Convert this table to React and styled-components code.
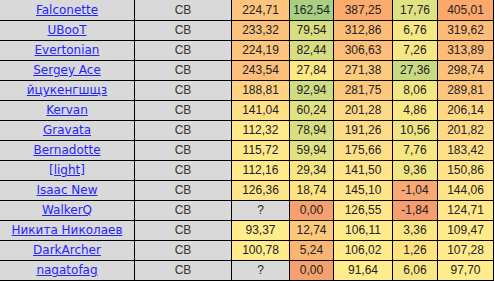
import React from 'react'
import styled, { createGlobalStyle } from 'styled-components'

const GlobalStyle = createGlobalStyle`
  html, body {
    margin: 0;
    padding: 0;
    background: #ffffff;
  }
`

const rows = [
  { name: 'Falconette', cells: [['224,71', '#fcc47c'], ['162,54', '#a9cf82'], ['387,25', '#fbab6c'], ['17,76', '#dfe283'], ['405,01', '#fba86b']] },
  { name: 'UBooT', cells: [['233,32', '#fcc17a'], ['79,54', '#d8de81'], ['312,86', '#fcbd77'], ['6,76', '#f6e884'], ['319,62', '#fcbb76']] },
  { name: 'Evertonian', cells: [['224,19', '#fcc47c'], ['82,44', '#d6de81'], ['306,63', '#fcbe78'], ['7,26', '#f5e784'], ['313,89', '#fcbc77']] },
  { name: 'Sergey Ace', cells: [['243,54', '#fcbe78'], ['27,84', '#fbe984'], ['271,38', '#fdcb7e'], ['27,36', '#c8d981'], ['298,74', '#fcc27a']] },
  { name: 'йцукенгшщз', cells: [['188,81', '#fdd383'], ['92,94', '#cfdc81'], ['281,75', '#fdc77c'], ['8,06', '#f3e684'], ['289,81', '#fdc57b']] },
  { name: 'Kervan', cells: [['141,04', '#fee187'], ['60,24', '#e1e283'], ['201,28', '#fed985'], ['4,86', '#f9e884'], ['206,14', '#fed884']] },
  { name: 'Gravata', cells: [['112,32', '#ffe98a'], ['78,94', '#d9df81'], ['191,26', '#fedb86'], ['10,56', '#ede584'], ['201,82', '#fed985']] },
  { name: 'Bernadotte', cells: [['115,72', '#ffe88a'], ['59,94', '#e1e283'], ['175,66', '#fedf87'], ['7,76', '#f4e784'], ['183,42', '#fede87']] },
  { name: '[light]', cells: [['112,16', '#ffe98a'], ['29,34', '#f6e784'], ['141,50', '#ffe489'], ['9,36', '#f0e684'], ['150,86', '#fee389']] },
  { name: 'Isaac New', cells: [['126,36', '#ffe589'], ['18,74', '#fde382'], ['145,10', '#ffe389'], ['-1,04', '#f8a873'], ['144,06', '#fee489']] },
  { name: 'WalkerQ', cells: [['?', '#d9d9d9'], ['0,00', '#f5a06e'], ['126,55', '#ffe68a'], ['-1,84', '#f59d6e'], ['124,71', '#ffe78a']] },
  { name: 'Никита Николаев', cells: [['93,37', '#ffec8c'], ['12,74', '#fcc87b'], ['106,11', '#ffeb8b'], ['3,36', '#fbe884'], ['109,47', '#ffeb8b']] },
  { name: 'DarkArcher', cells: [['100,78', '#ffeb8b'], ['5,24', '#f9b574'], ['106,02', '#ffeb8b'], ['1,26', '#fde27f'], ['107,28', '#ffeb8b']] },
  { name: 'nagatofag', cells: [['?', '#d9d9d9'], ['0,00', '#f5a06e'], ['91,64', '#ffec8c'], ['6,06', '#f6e784'], ['97,70', '#ffec8c']] },
]

export default function App() {
  return (
    <>
      <GlobalStyle />
      <Sheet>
        {rows.map((row) => (
          <Row key={row.name}>
            <NameCell>
              <a href="#">{row.name}</a>
            </NameCell>
            <TypeCell>CB</TypeCell>
            {row.cells.map(([value, bg], i) => (
              <NumCell key={i} $bg={bg}>{value}</NumCell>
            ))}
          </Row>
        ))}
      </Sheet>
    </>
  )
}

const Sheet = styled.div`
  display: inline-grid;
  grid-template-columns: 134px 96px 57px 43px 58px 44px 55px;
  grid-template-rows: 20px repeat(13, 19px);
  gap: 1px;
  padding: 0 1px 1px 0;
  background: #000000;
`

const Row = styled.div`
  display: contents;
`

const Cell = styled.div`
  display: flex;
  align-items: flex-end;
  justify-content: center;
  padding-bottom: 2px;
  box-sizing: border-box;
  overflow: hidden;
  white-space: nowrap;
`

const NameCell = styled(Cell)`
  background: #d9d9d9;
  font-family: "DejaVu Sans", Verdana, sans-serif;
  font-size: 12px;
  line-height: 15px;

  a {
    color: #2424ff;
    text-decoration: underline;
  }
`

const TypeCell = styled(Cell)`
  background: #d9d9d9;
  color: #333333;
  font-family: "Liberation Sans", Arial, sans-serif;
  font-size: 12px;
  line-height: 15px;
`

const NumCell = styled(Cell)`
  background: ${(p) => p.$bg};
  color: #222222;
  font-family: "Liberation Sans", Arial, sans-serif;
  font-size: 12px;
  line-height: 15px;
`
